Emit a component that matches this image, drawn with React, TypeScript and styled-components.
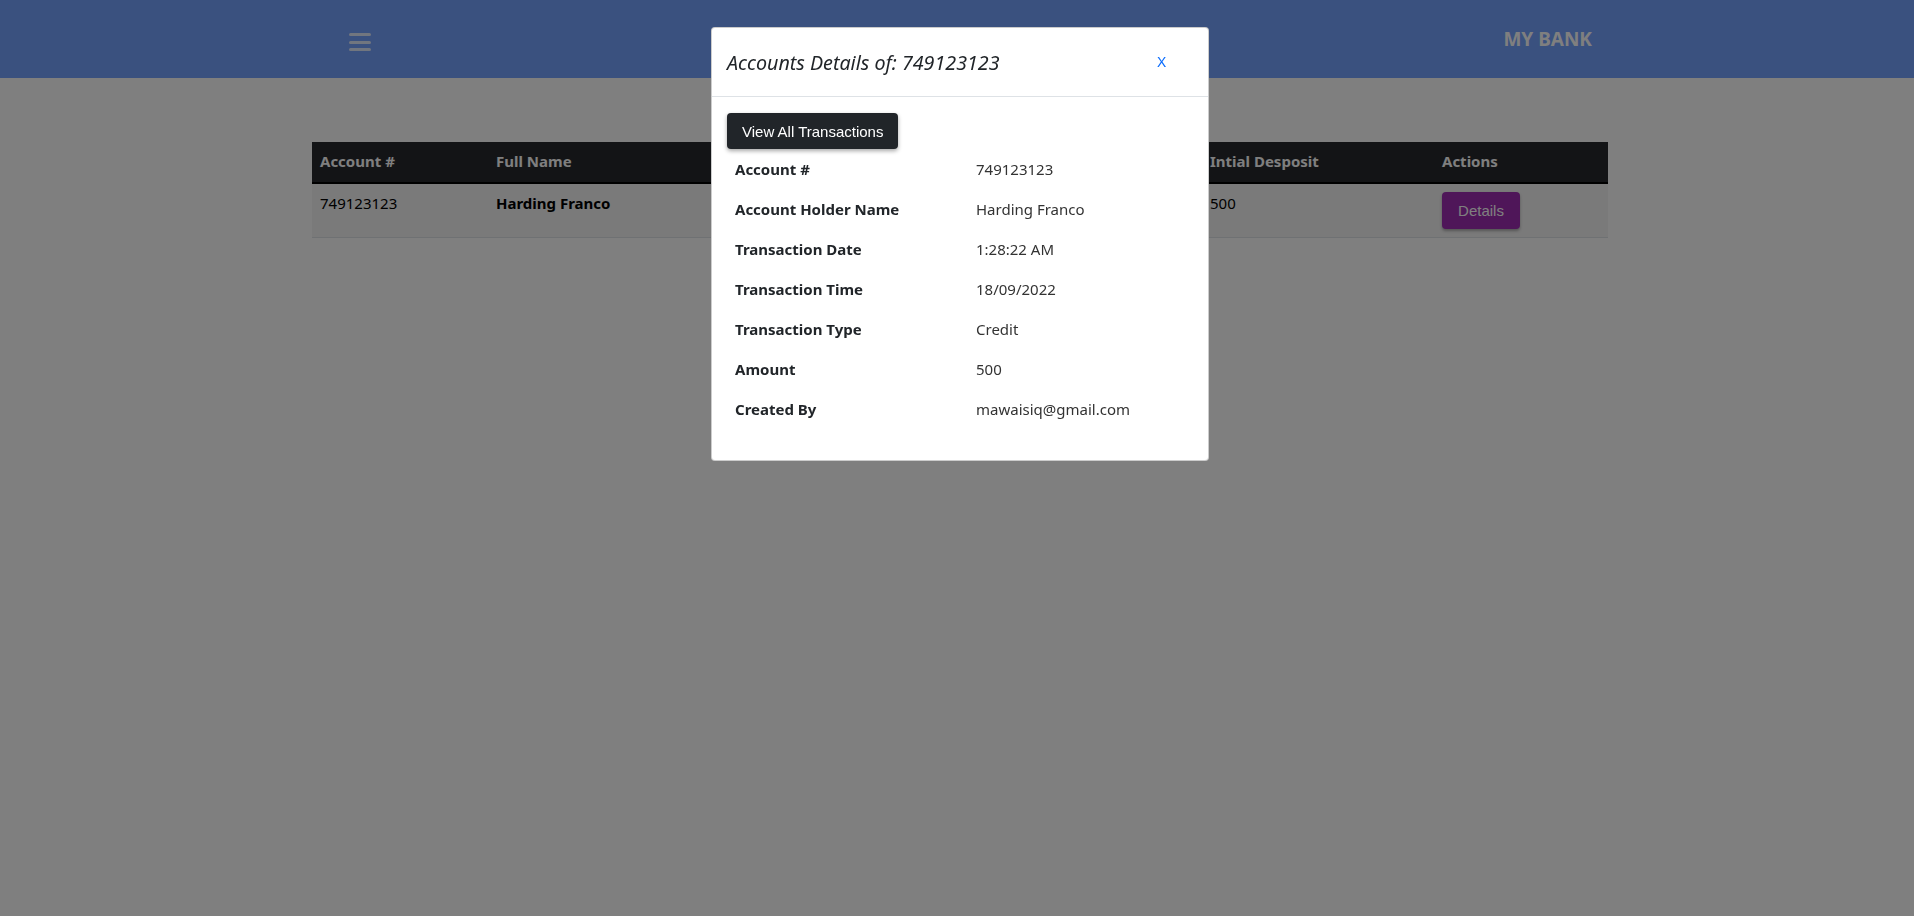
import React from "react";
import styled, { createGlobalStyle } from "styled-components";

const GlobalStyle = createGlobalStyle`
  html, body { margin: 0; padding: 0; }
  body {
    font-family: "Noto Sans", "Open Sans", sans-serif;
    background: #ffffff;
    color: #212529;
    width: 1914px;
    height: 916px;
    overflow: hidden;
  }
`;

const Navbar = styled.header`
  height: 78px;
  background: #74a2ff;
  display: flex;
  align-items: center;
  justify-content: space-between;
  padding: 0 322px 0 349px;
  box-sizing: border-box;
`;

const Burger = styled.button`
  width: 22px;
  height: 18px;
  padding: 0;
  border: none;
  background: none;
  display: flex;
  flex-direction: column;
  justify-content: space-between;
  margin-top: 6px;
  span {
    display: block;
    height: 3px;
    border-radius: 2px;
    background: #ffffff;
    opacity: 0.8;
  }
`;

const Brand = styled.div`
  font-family: "Noto Sans", sans-serif;
  font-weight: 700;
  font-size: 19px;
  color: #ffffff;
`;

const Main = styled.main`
  padding: 64px 0 0 312px;
`;

const Table = styled.table`
  width: 1296px;
  table-layout: fixed;
  border-collapse: collapse;
  font-size: 15px;
`;

const Th = styled.th<{ $w: number }>`
  background: #26282c;
  color: #ffffff;
  text-align: left;
  font-weight: 700;
  padding: 8px 8px 10px;
  height: 41px;
  box-sizing: border-box;
  border-bottom: 2px solid #000000;
  width: ${(p) => p.$w}px;
`;

const Td = styled.td<{ $bold?: boolean }>`
  background: #f4f4f4;
  color: #000000;
  font-weight: ${(p) => (p.$bold ? 700 : 400)};
  padding: 9px 8px 0;
  vertical-align: top;
  height: 54px;
  box-sizing: border-box;
  border-bottom: 1px solid #dee2e6;
`;

const PurpleButton = styled.button`
  background: #9e2cb2;
  color: #ffffff;
  border: none;
  border-radius: 4px;
  width: 78px;
  height: 37px;
  font-family: "Liberation Sans", Arial, sans-serif;
  font-size: 15px;
  box-shadow: 0 2px 3px rgba(0, 0, 0, 0.3);
  margin-top: -1px;
`;

const Backdrop = styled.div`
  position: fixed;
  inset: 0;
  background: rgba(0, 0, 0, 0.5);
`;

const Modal = styled.div`
  position: fixed;
  top: 27px;
  left: 711px;
  width: 498px;
  background: #ffffff;
  border-radius: 4px;
  border: 1px solid rgba(0, 0, 0, 0.2);
  box-sizing: border-box;
`;

const ModalHeader = styled.div`
  height: 69px;
  box-sizing: border-box;
  border-bottom: 1px solid #dee2e6;
  display: flex;
  align-items: center;
  justify-content: space-between;
  padding: 0 42px 0 15px;
`;

const Title = styled.h5`
  margin: 0;
  font-style: italic;
  font-weight: 400;
  font-size: 19.7px;
  color: #212529;
  font-family: "Noto Sans", sans-serif;
`;

const Close = styled.button`
  border: none;
  background: none;
  color: #0d6efd;
  font-family: "Noto Sans", sans-serif;
  font-size: 15px;
  padding: 0;
  margin-top: -2px;
`;

const ModalBody = styled.div`
  padding: 16px 15px 31px;
`;

const DarkButton = styled.button`
  background: #212529;
  color: #ffffff;
  border: none;
  border-radius: 4px;
  height: 36px;
  padding: 0 15px;
  font-family: "Liberation Sans", Arial, sans-serif;
  font-size: 15px;
  box-shadow: 0 2px 4px rgba(0, 0, 0, 0.35);
`;

const DetailTable = styled.table`
  border-collapse: collapse;
  width: 100%;
  font-size: 15px;
`;

const Label = styled.td`
  width: 225px;
  font-weight: 700;
  color: #212529;
  padding: 0 8px;
  height: 40px;
`;

const Value = styled.td`
  color: #333333;
  padding: 0 8px;
  height: 40px;
`;

const details: [string, string][] = [
  ["Account #", "749123123"],
  ["Account Holder Name", "Harding Franco"],
  ["Transaction Date", "1:28:22 AM"],
  ["Transaction Time", "18/09/2022"],
  ["Transaction Type", "Credit"],
  ["Amount", "500"],
  ["Created By", "mawaisiq@gmail.com"],
];

export default function App() {
  return (
    <>
      <GlobalStyle />
      <Navbar>
        <Burger aria-label="menu">
          <span />
          <span />
          <span />
        </Burger>
        <Brand>MY BANK</Brand>
      </Navbar>
      <Main>
        <Table>
          <thead>
            <tr>
              <Th $w={176}>Account #</Th>
              <Th $w={357}>Full Name</Th>
              <Th $w={357}></Th>
              <Th $w={232}>Intial Desposit</Th>
              <Th $w={174}>Actions</Th>
            </tr>
          </thead>
          <tbody>
            <tr>
              <Td>749123123</Td>
              <Td $bold>Harding Franco</Td>
              <Td></Td>
              <Td>500</Td>
              <Td>
                <PurpleButton>Details</PurpleButton>
              </Td>
            </tr>
          </tbody>
        </Table>
      </Main>
      <Backdrop />
      <Modal>
        <ModalHeader>
          <Title>Accounts Details of: 749123123</Title>
          <Close>X</Close>
        </ModalHeader>
        <ModalBody>
          <DarkButton>View All Transactions</DarkButton>
          <DetailTable>
            <tbody>
              {details.map(([k, v]) => (
                <tr key={k}>
                  <Label>{k}</Label>
                  <Value>{v}</Value>
                </tr>
              ))}
            </tbody>
          </DetailTable>
        </ModalBody>
      </Modal>
    </>
  );
}
